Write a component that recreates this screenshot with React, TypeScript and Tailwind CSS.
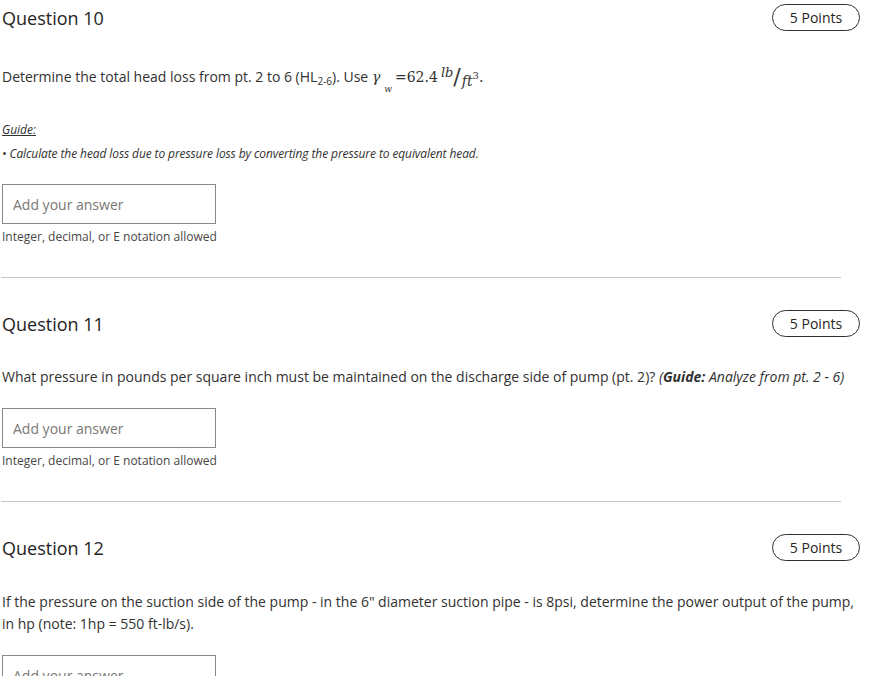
import React from "react";

function Header({ n }: { n: number }) {
  return (
    <div className="flex items-center justify-between w-[858px] h-[27px]">
      <div className="text-[18px] text-[#252423] leading-[24px]">Question {n}</div>
      <div className="h-[27px] w-[88px] rounded-full border border-[#323130] flex items-center justify-center text-[14px] text-[#252423]">
        5 Points
      </div>
    </div>
  );
}

function Answer() {
  return (
    <>
      <div className="mt-0 w-[214px] h-[40px] border border-[#8a8886] flex items-center px-[10px] text-[14px] text-[#7a7774]">
        Add your answer
      </div>
      <div className="mt-[5px] text-[12px] leading-[16px] text-[#484644]">
        Integer, decimal, or E notation allowed
      </div>
    </>
  );
}

function Divider() {
  return <div className="ml-[-1px] w-[840px] h-px bg-[#c8c6c4]" />;
}

export default function App() {
  return (
    <div
      className="w-[889px] h-[676px] overflow-hidden bg-white pl-[2px] text-[#323130]"
      style={{ fontFamily: '"Open Sans", "Noto Sans", sans-serif' }}
    >
      {/* Q10 */}
      <div className="pt-[4px]">
        <Header n={10} />
        <div className="mt-[31px] text-[14px] leading-[22px] h-[22px] whitespace-nowrap">
          Determine the total head loss from pt. 2 to 6 (HL
          <span className="text-[10px] align-[-3px]">2-6</span>). Use{" "}
          <span style={{ fontFamily: '"DejaVu Serif", serif' }} className="text-[14px]">
            <span className="italic">γ</span>
            <span className="italic text-[9px] align-[-10px] ml-[4px]">w</span>
            <span className="ml-[3px]">=62.4</span>
            <span className="italic text-[13px] align-[5px] ml-[3px]">lb</span>
            <span className="text-[22px] align-[-2px] font-light">/</span>
            <span className="italic text-[14px] align-[-4px] ml-[1px]">ft</span>
            <span className="text-[10px] align-[3px]">3</span>
            <span>.</span>
          </span>
        </div>
        <div className="mt-[38px] text-[12px] leading-[16px] italic underline text-[#323130]">Guide:</div>
        <div className="mt-[8px] text-[12px] leading-[16px] italic tracking-[-0.1px]">
          • Calculate the head loss due to pressure loss by converting the pressure to equivalent head.
        </div>
        <div className="mt-[22px]">
          <Answer />
        </div>
        <div className="mt-[32px]">
          <Divider />
        </div>
      </div>

      {/* Q11 */}
      <div className="pt-[32px]">
        <Header n={11} />
        <div className="mt-[29px] text-[14px] leading-[22px] whitespace-nowrap">
          What pressure in pounds per square inch must be maintained on the discharge side of pump (pt. 2)?{" "}
          <span className="italic">
            (<b>Guide:</b> Analyze from pt. 2 - 6)
          </span>
        </div>
        <div className="mt-[20px]">
          <Answer />
        </div>
        <div className="mt-[32px]">
          <Divider />
        </div>
      </div>

      {/* Q12 */}
      <div className="pt-[32px]">
        <Header n={12} />
        <div className="mt-[30px] text-[14px] leading-[22px] w-[860px]">
          If the pressure on the suction side of the pump - in the 6" diameter suction pipe - is 8psi, determine the power output of the pump,
          in hp (note: 1hp = 550 ft-lb/s).
        </div>
        <div className="mt-[20px]">
          <Answer />
        </div>
      </div>
    </div>
  );
}
